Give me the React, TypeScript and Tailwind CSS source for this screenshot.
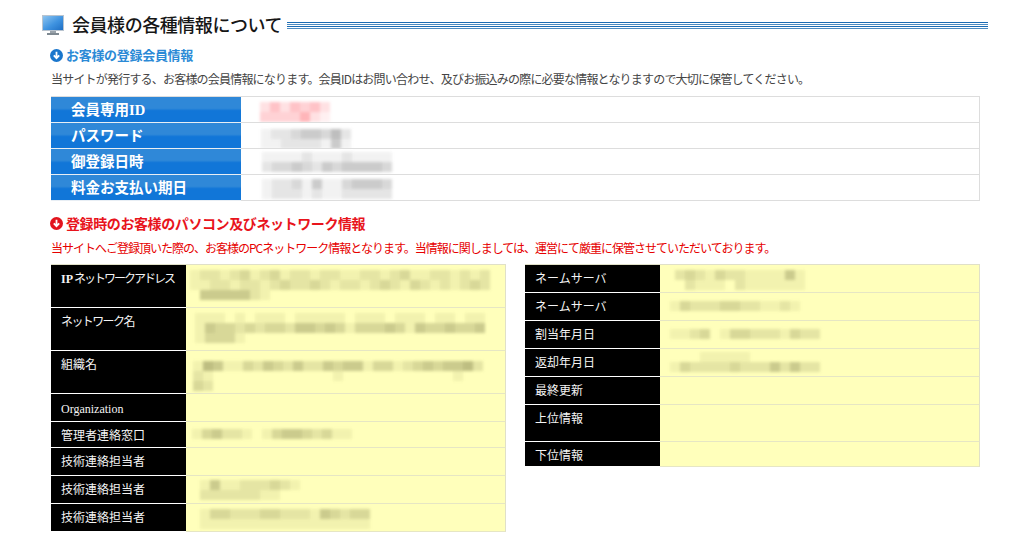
const SANS = "font-['Noto_Sans_CJK_JP','Noto_Sans',sans-serif]";

function Mosaic({ rows, tone, pad }: { rows: string[]; tone: string; pad: string }) {
  return (
    <div className={`${pad} blur-[1.5px]`}>
      {rows.map((r, i) => (
        <div key={i} className="flex h-[10px]">
          {r.split("").map((c, j) => (
            <div key={j} className="h-[10px] w-[10px]" style={{ backgroundColor: `rgba(${tone},${Number(c) * 0.09})` }} />
          ))}
        </div>
      ))}
    </div>
  );
}

const GRAY = "110,110,110";
const PINK = "255,90,100";
const OLIVE = "110,110,60";

function CircleArrow({ color }: { color: string }) {
  return (
    <svg width="13" height="13" viewBox="0 0 13 13" className="shrink-0">
      <circle cx="6.5" cy="6.5" r="6.5" fill={color} />
      <path d="M6.5 2.8v6M3.8 6.4l2.7 2.8 2.7-2.8" fill="none" stroke="#fff" strokeWidth="1.8" />
    </svg>
  );
}

function Monitor() {
  return (
    <svg width="22" height="21" viewBox="0 0 22 21" className="shrink-0">
      <defs>
        <linearGradient id="scr" x1="0" y1="0" x2="1" y2="1">
          <stop offset="0" stopColor="#8cc4f0" />
          <stop offset="0.55" stopColor="#3f93e0" />
          <stop offset="1" stopColor="#1f6fc4" />
        </linearGradient>
      </defs>
      <rect x="0" y="0" width="22" height="16" fill="#b9c4cf" />
      <rect x="1" y="1" width="20" height="14" fill="url(#scr)" />
      <rect x="8" y="16" width="6" height="2" fill="#9aa3ab" />
      <rect x="5" y="18" width="12" height="2" fill="#7f8a92" />
    </svg>
  );
}

const blueRows: { label: string; pad: string; tone: string; rows: string[] }[] = [
  { label: "会員専用ID", pad: "pl-[19px] pt-[5px]", tone: PINK, rows: ["2424342", "3333521"] },
  { label: "パスワード", pad: "pl-[20px] pt-[6px]", tone: GRAY, rows: ["122344352", "112222141"] },
  { label: "御登録日時", pad: "pl-[21px] pt-[3px]", tone: GRAY, rows: ["1111211121111", "2334324344443"] },
  { label: "料金お支払い期日", pad: "pl-[21px] pt-[4px]", tone: GRAY, rows: ["1223141134443", "1222121122222"] },
];

const leftRows: { label: string; h: string; pad?: string; rows?: string[]; serif?: boolean; tight?: string; prefix?: string }[] = [
  {
    prefix: "IP",
    label: "ネットワークアドレス",
    h: "h-[43px]",
    tight: "tracking-[-2px]",
    pad: "pl-[4px] pt-[5px]",
    rows: ["122123123122122112212311221212", "112212212322321221232132121232", "044444210000000000000000000000"],
  },
  {
    label: "ネットワーク名",
    h: "h-[43px]",
    tight: "tracking-[-1.6px]",
    pad: "pl-[9px] pt-[5px]",
    rows: ["111010111011111011101110110110", "143323233244343133343143343340", "133310000000000000000000000000"],
  },
  {
    label: "組織名",
    h: "h-[43px]",
    pad: "pl-[7px] pt-[10px]",
    rows: ["154113243242243441331234344520", "210000000000001000000000001000", "320000000000000000000000000000"],
  },
  { label: "Organization", h: "h-[28px]", serif: true },
  { label: "管理者連絡窓口", h: "h-[26px]", pad: "pl-[6px] pt-[7px]", rows: ["1342210134432311"] },
  { label: "技術連絡担当者", h: "h-[28px]" },
  { label: "技術連絡担当者", h: "h-[28px]", pad: "pl-[14px] pt-[4px]", rows: ["14112223210000", "22222211000000"] },
  { label: "技術連絡担当者", h: "h-[28px]", pad: "pl-[14px] pt-[5px]", rows: ["13322233222143233", "11111111111111111"] },
];

const rightRows: { label: string; h: string; pad?: string; rows?: string[]; tight?: string }[] = [
  { label: "ネームサーバ", h: "h-[28px]", pad: "pl-[15px] pt-[5px]", rows: ["2321322111141", "0211102111111"] },
  { label: "ネームサーバ", h: "h-[28px]", pad: "pl-[10px] pt-[8px]", rows: ["1322233221121"] },
  { label: "割当年月日", h: "h-[28px]", pad: "pl-[10px] pt-[8px]", rows: ["112301332221322"] },
  { label: "返却年月日", h: "h-[28px]", pad: "pl-[10px] pt-[3px]", rows: ["000111110000000", "132222322242422"] },
  { label: "最終更新", h: "h-[28px]" },
  { label: "上位情報", h: "h-[37px]" },
  { label: "下位情報", h: "h-[25px]" },
];

function InfoRow({ label, h, pad, rows, serif, tight, prefix }: { label: string; h: string; pad?: string; rows?: string[]; serif?: boolean; tight?: string; prefix?: string }) {
  return (
    <div className={`flex ${h}`}>
      <div className={`w-[135px] shrink-0 overflow-hidden whitespace-nowrap border-b border-white bg-black pl-[10px] text-[12px] leading-[18px] text-[#f4f4f4] ${serif ? "pt-[6px] font-['Liberation_Serif',serif]" : "pt-[4px]"}`}>
        {prefix ? <span className="mr-[1px] font-['Liberation_Serif',serif] font-bold">{prefix}</span> : null}
        <span className={tight}>{label}</span>
      </div>
      <div className="min-w-0 flex-1 overflow-hidden border-r border-b border-r-[#e0e0c8] border-b-[#e6e6c4] bg-[#ffffbb]">
        {rows && pad ? <Mosaic rows={rows} tone={OLIVE} pad={pad} /> : null}
      </div>
    </div>
  );
}

export default function App() {
  return (
    <div className={`h-[551px] w-[1028px] overflow-hidden bg-white ${SANS}`}>
      <div className="ml-[42px] mt-[14px] flex h-[22px] w-[946px] items-center">
        <Monitor />
        <h1 className="ml-[8px] -translate-y-px whitespace-nowrap text-[18px] font-medium leading-[22px] tracking-[-0.45px] text-[#161616]">会員様の各種情報について</h1>
        <div className="ml-[5px] flex h-[7px] flex-1 flex-col justify-between">
          <div className="h-px bg-[#1b6cb4]" />
          <div className="h-px bg-[#4d8cc2]" />
          <div className="h-px bg-[#1b6cb4]" />
          <div className="h-px bg-[#4d8cc2]" />
        </div>
      </div>

      <div className="ml-[50px] mt-[11px] flex h-[16px] items-center gap-[3px]">
        <CircleArrow color="#1a76cc" />
        <h2 className="whitespace-nowrap text-[13px] font-bold leading-[16px] tracking-[-0.3px] text-[#2b8ad6]">お客様の登録会員情報</h2>
      </div>
      <p className="ml-[51px] mt-[8px] h-[16px] whitespace-nowrap text-[12px] leading-[16px] tracking-[-0.8px] text-[#444]">
        当サイトが発行する、お客様の会員情報になります。会員IDはお問い合わせ、及びお振込みの際に必要な情報となりますので大切に保管してください。
      </p>

      <div className="ml-[51px] mt-[9px] w-[929px] border-t border-r border-[#dddddd]">
        {blueRows.map((r) => (
          <div key={r.label} className="flex h-[26px]">
            <div className="w-[190px] shrink-0 border-b border-[#e8eef4] bg-[linear-gradient(#2f88d8_0%,#2f88d8_45%,#1176d8_55%,#1176d8_100%)] pl-[20px] font-['Liberation_Serif','Noto_Sans_CJK_JP',serif] text-[14.5px] font-bold leading-[26px] text-white">
              {r.label}
            </div>
            <div className="min-w-0 flex-1 overflow-hidden border-b border-[#dddddd]">
              <Mosaic rows={r.rows} tone={r.tone} pad={r.pad} />
            </div>
          </div>
        ))}
      </div>

      <div className="ml-[50px] mt-[14px] flex h-[16px] items-center gap-[3px]">
        <CircleArrow color="#e2141c" />
        <h2 className="whitespace-nowrap text-[14px] font-bold leading-[16px] tracking-[-0.4px] text-[#e8141c]">登録時のお客様のパソコン及びネットワーク情報</h2>
      </div>
      <p className="ml-[51px] mt-[9px] h-[16px] whitespace-nowrap text-[12px] leading-[16px] tracking-[-1px] text-[#e60000]">
        当サイトへご登録頂いた際の、お客様のPCネットワーク情報となります。当情報に関しましては、運営にて厳重に保管させていただいております。
      </p>

      <div className="ml-[51px] mt-[8px] flex w-[929px] items-start gap-[19px]">
        <div className="w-[455px] border-t border-[#e0e0c8]">
          {leftRows.map((r, i) => (
            <InfoRow key={i} {...r} />
          ))}
        </div>
        <div className="w-[455px] border-t border-[#e0e0c8]">
          {rightRows.map((r, i) => (
            <InfoRow key={i} {...r} />
          ))}
        </div>
      </div>
    </div>
  );
}
